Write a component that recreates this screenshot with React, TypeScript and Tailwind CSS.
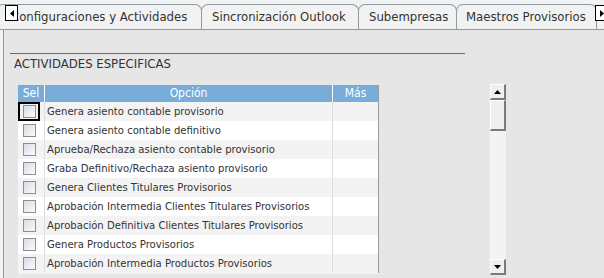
import React from 'react';

const rows = [
  'Genera asiento contable provisorio',
  'Genera asiento contable definitivo',
  'Aprueba/Rechaza asiento contable provisorio',
  'Graba Definitivo/Rechaza asiento provisorio',
  'Genera Clientes Titulares Provisorios',
  'Aprobación Intermedia Clientes Titulares Provisorios',
  'Aprobación Definitiva Clientes Titulares Provisorios',
  'Genera Productos Provisorios',
  'Aprobación Intermedia Productos Provisorios',
];

const tabs = [
  { label: 'Configuraciones y Actividades', w: 'w-[206px]', pad: 'pl-[14px]' },
  { label: 'Sincronización Outlook', w: 'w-[158px]', pad: 'pl-[10px]' },
  { label: 'Subempresas', w: 'w-[99px]', pad: 'pl-[10px]' },
  { label: 'Maestros Provisorios', w: 'w-[141px]', pad: 'pl-[9px]' },
];

function Checkbox() {
  return <div className="h-[13px] w-[13px] border border-[#8e8e8e] bg-gradient-to-br from-[#d6dde6] to-[#fbfbfb]" />;
}

function ScrollBtn({ dir }: { dir: 'up' | 'down' }) {
  return (
    <div className="flex h-[16px] w-[16px] items-center justify-center border-t border-l border-r-2 border-b-2 border-t-white border-l-white border-r-[#7a7a7a] border-b-[#7a7a7a] bg-[#efefef]">
      <svg width="7" height="4" viewBox="0 0 7 4">
        {dir === 'up' ? <path d="M3.5 0 L7 4 L0 4 Z" fill="#000" /> : <path d="M0 0 L7 0 L3.5 4 Z" fill="#000" />}
      </svg>
    </div>
  );
}

export default function App() {
  return (
    <div className="relative h-[278px] w-[604px] overflow-hidden bg-[#f2f2f2] font-['DejaVu_Sans_Condensed','DejaVu_Sans',sans-serif] text-[#333]">
      {/* tab strip */}
      <div className="flex h-[30px] items-end border-b border-[#8c9ca4]">
        {tabs.map((t, i) => (
          <div
            key={t.label}
            className={`${t.w} ${t.pad} ${i === 0 ? '-ml-[4px]' : '-ml-[1px]'} flex h-[25px] shrink-0 items-center rounded-t-[7px] border border-b-0 border-[#8c9ca4] bg-[#f2f2f2] text-[13px] whitespace-nowrap text-[#333]`}
          >
            {t.label}
          </div>
        ))}
      </div>

      {/* tab scroll arrows */}
      <div className="absolute top-[5px] left-[5px] flex h-[16px] w-[13px] items-center justify-center border border-black bg-white">
        <svg width="4" height="7" viewBox="0 0 4 7"><path d="M4 0 L4 7 L0 3.5 Z" fill="#000" /></svg>
      </div>
      <div className="absolute top-[5px] left-[595px] flex h-[16px] w-[13px] items-center justify-center border border-black bg-white">
        <svg width="4" height="7" viewBox="0 0 4 7"><path d="M0 0 L0 7 L4 3.5 Z" fill="#000" /></svg>
      </div>

      {/* panel */}
      <div className="ml-[3px] h-[248px] border-l border-[#8c9ca4] bg-[#e6e6e6]">
        <div className="pt-[23px] pl-[6px]">
          <div className="h-px w-[455px] bg-[#3a78a8]" />
          <div className="mt-[2px] pl-[4px] text-[13px] leading-[15px] text-[#333]">ACTIVIDADES ESPECIFICAS</div>
        </div>

        <div className="mt-[14px] flex items-start pl-[14px]">
          <div className="w-[361px]">
            <div className="grid h-[17px] grid-cols-[27px_288px_46px] bg-[#78acd9] text-[12px] leading-[17px] text-white">
              <div className="border-r border-white text-center">Sel</div>
              <div className="border-r border-white text-center">Opción</div>
              <div className="border-r border-[#9a9a9a] text-center">Más</div>
            </div>
            <div className="h-[171px] overflow-hidden border-r border-[#9a9a9a]">
              {rows.map((r, i) => (
                <div
                  key={r}
                  className={`grid h-[19px] grid-cols-[27px_288px_45px] text-[11.2px] ${i % 2 === 0 ? 'bg-[#f3f3f3]' : 'bg-white'}`}
                >
                  <div className="flex border-r border-[#dedede]">
                    <div className={`flex h-[19px] w-[22px] items-center justify-center border-2 ${i === 0 ? 'border-black' : 'border-transparent'}`}>
                      <Checkbox />
                    </div>
                  </div>
                  <div className="flex items-center border-r border-[#dedede] pt-[1px] pl-[2px] whitespace-nowrap">{r}</div>
                  <div />
                </div>
              ))}
            </div>
            <div className="h-px bg-[#f4f4f4]" />
          </div>

          <div className="-mt-[1px] ml-[111px] flex h-[191px] w-[16px] flex-col">
            <ScrollBtn dir="up" />
            <div className="h-[31px] w-[16px] border-t border-l border-r-2 border-b-2 border-t-white border-l-white border-r-[#7a7a7a] border-b-[#7a7a7a] bg-[#efefef]" />
            <div className="flex-1 bg-[repeating-conic-gradient(#fafafa_0_25%,#ececec_0_50%)] bg-[length:2px_2px]" />
            <ScrollBtn dir="down" />
          </div>
        </div>
      </div>
    </div>
  );
}
